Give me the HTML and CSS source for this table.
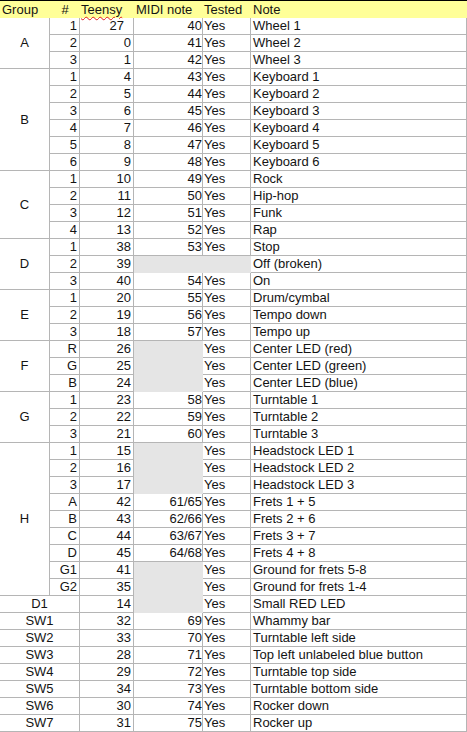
FILE: index.html
```html
<!DOCTYPE html>
<html>
<head>
<meta charset="utf-8">
<link rel="stylesheet" href="styles.css">
</head>
<body>
<table class="sheet">
<colgroup>
<col class="c-group"><col class="c-num"><col class="c-teensy"><col class="c-midi"><col class="c-tested"><col class="c-note">
</colgroup>
<thead>
<tr>
<th class="h-group">Group</th><th class="h-num">#</th><th class="h-teensy"><span class="spell">Teensy</span></th><th class="h-midi">MIDI note</th><th class="h-tested">Tested</th><th class="h-note">Note</th>
</tr>
</thead>
<tbody>
<tr><td class="grp" rowspan="3">A</td><td class="r">1</td><td class="r pad27">27</td><td class="m">40</td><td class="t">Yes</td><td class="n">Wheel 1</td></tr>
<tr><td class="r">2</td><td class="r">0</td><td class="m">41</td><td class="t">Yes</td><td class="n">Wheel 2</td></tr>
<tr><td class="r">3</td><td class="r">1</td><td class="m">42</td><td class="t">Yes</td><td class="n">Wheel 3</td></tr>

<tr><td class="grp" rowspan="6">B</td><td class="r">1</td><td class="r">4</td><td class="m">43</td><td class="t">Yes</td><td class="n">Keyboard 1</td></tr>
<tr><td class="r">2</td><td class="r">5</td><td class="m">44</td><td class="t">Yes</td><td class="n">Keyboard 2</td></tr>
<tr><td class="r">3</td><td class="r">6</td><td class="m">45</td><td class="t">Yes</td><td class="n">Keyboard 3</td></tr>
<tr><td class="r">4</td><td class="r">7</td><td class="m">46</td><td class="t">Yes</td><td class="n">Keyboard 4</td></tr>
<tr><td class="r">5</td><td class="r">8</td><td class="m">47</td><td class="t">Yes</td><td class="n">Keyboard 5</td></tr>
<tr><td class="r">6</td><td class="r">9</td><td class="m">48</td><td class="t">Yes</td><td class="n">Keyboard 6</td></tr>

<tr><td class="grp" rowspan="4">C</td><td class="r">1</td><td class="r">10</td><td class="m">49</td><td class="t">Yes</td><td class="n">Rock</td></tr>
<tr><td class="r">2</td><td class="r">11</td><td class="m">50</td><td class="t">Yes</td><td class="n">Hip-hop</td></tr>
<tr><td class="r">3</td><td class="r">12</td><td class="m">51</td><td class="t">Yes</td><td class="n">Funk</td></tr>
<tr><td class="r">4</td><td class="r">13</td><td class="m">52</td><td class="t">Yes</td><td class="n">Rap</td></tr>

<tr><td class="grp" rowspan="3">D</td><td class="r">1</td><td class="r">38</td><td class="m">53</td><td class="t">Yes</td><td class="n">Stop</td></tr>
<tr><td class="r">2</td><td class="r">39</td><td class="na" colspan="2"></td><td class="n">Off (broken)</td></tr>
<tr><td class="r">3</td><td class="r">40</td><td class="m">54</td><td class="t">Yes</td><td class="n">On</td></tr>

<tr><td class="grp" rowspan="3">E</td><td class="r">1</td><td class="r">20</td><td class="m">55</td><td class="t">Yes</td><td class="n">Drum/cymbal</td></tr>
<tr><td class="r">2</td><td class="r">19</td><td class="m">56</td><td class="t">Yes</td><td class="n">Tempo down</td></tr>
<tr><td class="r">3</td><td class="r">18</td><td class="m">57</td><td class="t">Yes</td><td class="n">Tempo up</td></tr>

<tr><td class="grp" rowspan="3">F</td><td class="r">R</td><td class="r">26</td><td class="na" rowspan="3"></td><td class="t">Yes</td><td class="n">Center LED (red)</td></tr>
<tr><td class="r">G</td><td class="r">25</td><td class="t">Yes</td><td class="n">Center LED (green)</td></tr>
<tr><td class="r">B</td><td class="r">24</td><td class="t">Yes</td><td class="n">Center LED (blue)</td></tr>

<tr><td class="grp" rowspan="3">G</td><td class="r">1</td><td class="r">23</td><td class="m">58</td><td class="t">Yes</td><td class="n">Turntable 1</td></tr>
<tr><td class="r">2</td><td class="r">22</td><td class="m">59</td><td class="t">Yes</td><td class="n">Turntable 2</td></tr>
<tr><td class="r">3</td><td class="r">21</td><td class="m">60</td><td class="t">Yes</td><td class="n">Turntable 3</td></tr>

<tr><td class="grp" rowspan="9">H</td><td class="r">1</td><td class="r">15</td><td class="na" rowspan="3"></td><td class="t">Yes</td><td class="n">Headstock LED 1</td></tr>
<tr><td class="r">2</td><td class="r">16</td><td class="t">Yes</td><td class="n">Headstock LED 2</td></tr>
<tr><td class="r">3</td><td class="r">17</td><td class="t">Yes</td><td class="n">Headstock LED 3</td></tr>
<tr><td class="r">A</td><td class="r">42</td><td class="m">61/65</td><td class="t">Yes</td><td class="n">Frets 1 + 5</td></tr>
<tr><td class="r">B</td><td class="r">43</td><td class="m">62/66</td><td class="t">Yes</td><td class="n">Frets 2 + 6</td></tr>
<tr><td class="r">C</td><td class="r">44</td><td class="m">63/67</td><td class="t">Yes</td><td class="n">Frets 3 + 7</td></tr>
<tr><td class="r">D</td><td class="r">45</td><td class="m">64/68</td><td class="t">Yes</td><td class="n">Frets 4 + 8</td></tr>
<tr><td class="r">G1</td><td class="r">41</td><td class="na" rowspan="3"></td><td class="t">Yes</td><td class="n">Ground for frets 5-8</td></tr>
<tr><td class="r">G2</td><td class="r">35</td><td class="t">Yes</td><td class="n">Ground for frets 1-4</td></tr>

<tr><td class="grp" colspan="2">D1</td><td class="r">14</td><td class="t">Yes</td><td class="n">Small RED LED</td></tr>

<tr><td class="grp" colspan="2">SW1</td><td class="r">32</td><td class="m">69</td><td class="t">Yes</td><td class="n">Whammy bar</td></tr>
<tr><td class="grp" colspan="2">SW2</td><td class="r">33</td><td class="m">70</td><td class="t">Yes</td><td class="n">Turntable left side</td></tr>
<tr><td class="grp" colspan="2">SW3</td><td class="r">28</td><td class="m">71</td><td class="t">Yes</td><td class="n">Top left unlabeled blue button</td></tr>
<tr><td class="grp" colspan="2">SW4</td><td class="r">29</td><td class="m">72</td><td class="t">Yes</td><td class="n">Turntable top side</td></tr>
<tr><td class="grp" colspan="2">SW5</td><td class="r">34</td><td class="m">73</td><td class="t">Yes</td><td class="n">Turntable bottom side</td></tr>
<tr><td class="grp" colspan="2">SW6</td><td class="r">30</td><td class="m">74</td><td class="t">Yes</td><td class="n">Rocker down</td></tr>
<tr><td class="grp" colspan="2">SW7</td><td class="r">31</td><td class="m">75</td><td class="t">Yes</td><td class="n">Rocker up</td></tr>
</tbody>
</table>
</body>
</html>
```

FILE: styles.css
```css
html, body {
  margin: 0;
  padding: 0;
  background: #ffffff;
}

body {
  font-family: "Liberation Sans", Arial, sans-serif;
  font-size: 13px;
  color: #141414;
}

.sheet {
  border-collapse: separate;
  border-spacing: 0;
  table-layout: fixed;
  width: 467px;
}

.c-group { width: 50px; }
.c-num { width: 30px; }
.c-teensy { width: 54px; }
.c-midi { width: 69px; }
.c-tested { width: 48px; }
.c-note { width: 216px; }

.sheet th {
  background: #ffff99;
  border-top: 1px solid #000000;
  font-weight: normal;
  line-height: 17px;
  padding: 0;
  text-align: left;
  white-space: nowrap;
}

.h-group { padding-left: 2px !important; }
.h-num { text-align: center !important; }
.h-teensy { padding-left: 1px !important; }
.h-midi { padding-left: 2px !important; }
.h-tested { padding-left: 1px !important; }
.h-note { padding-left: 2px !important; }

.spell {
  text-decoration: underline wavy #e01b1b;
  text-decoration-thickness: 1px;
  text-underline-offset: 2px;
}

.sheet td {
  box-sizing: border-box;
  line-height: 16px;
  padding: 0;
  border-right: 1px solid #b5b5b5;
  border-bottom: 1px solid #b5b5b5;
  white-space: nowrap;
  overflow: hidden;
  vertical-align: middle;
}

.sheet td.grp {
  text-align: center;
}

.sheet td.r {
  text-align: right;
  padding-right: 2px;
}

.sheet td.pad27 {
  padding-right: 9px;
}

.sheet td.m {
  text-align: right;
  padding-right: 0;
}

.sheet td.t {
  padding-left: 1px;
}

.sheet td.n {
  padding-left: 2px;
}

.sheet td.na {
  background: #e5e5e5;
  border-color: #e5e5e5;
}
```
